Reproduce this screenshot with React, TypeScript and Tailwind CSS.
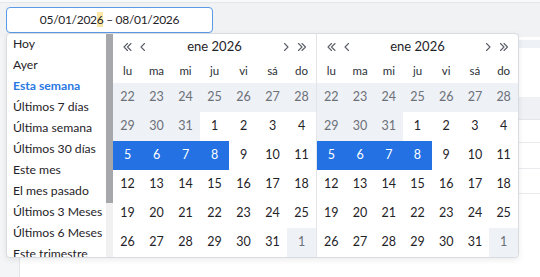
import React from 'react';

const presets = [
  'Hoy',
  'Ayer',
  'Esta semana',
  'Últimos 7 días',
  'Última semana',
  'Últimos 30 días',
  'Este mes',
  'El mes pasado',
  'Últimos 3 Meses',
  'Últimos 6 Meses',
  'Este trimestre',
];

const weekDays = ['lu', 'ma', 'mi', 'ju', 'vi', 'sá', 'do'];

type Day = { n: number; out?: boolean; sel?: boolean };

const weeks: Day[][] = [
  [22, 23, 24, 25, 26, 27, 28].map(n => ({ n, out: true })),
  [
    { n: 29, out: true },
    { n: 30, out: true },
    { n: 31, out: true },
    { n: 1 },
    { n: 2 },
    { n: 3 },
    { n: 4 },
  ],
  [5, 6, 7, 8].map(n => ({ n, sel: true })).concat([9, 10, 11].map(n => ({ n }))),
  [12, 13, 14, 15, 16, 17, 18].map(n => ({ n })),
  [19, 20, 21, 22, 23, 24, 25].map(n => ({ n })),
  [26, 27, 28, 29, 30, 31].map(n => ({ n } as Day)).concat([{ n: 1, out: true }]),
];

function Chevron({ dir, double }: { dir: 'l' | 'r'; double?: boolean }) {
  const one = dir === 'l' ? 'M5.5 1.5 2 5l3.5 3.5' : 'M2.5 1.5 6 5 2.5 8.5';
  const two = dir === 'l' ? 'M9 1.5 5.5 5 9 8.5' : 'M6 1.5 9.5 5 6 8.5';
  return (
    <svg width={double ? 11 : 8} height="10" viewBox={double ? '0 0 11 10' : '0 0 8 10'} fill="none" stroke="#5b6068" strokeWidth="1.1" strokeLinecap="round" strokeLinejoin="round">
      <path d={one} />
      {double && <path d={two} />}
    </svg>
  );
}

function Calendar({ className = '' }: { className?: string }) {
  return (
    <div className={`flex flex-col ${className}`}>
      {/* month header */}
      <div className="h-[25px] flex items-center justify-between px-[9px]">
        <div className="flex items-center gap-[6px]">
          <Chevron dir="l" double />
          <Chevron dir="l" />
        </div>
        <span className="text-[13px] text-[#1f2328]">ene 2026</span>
        <div className="flex items-center gap-[6px]">
          <Chevron dir="r" />
          <Chevron dir="r" double />
        </div>
      </div>
      {/* weekdays */}
      <div className="grid grid-cols-7 h-[24px] items-center">
        {weekDays.map(d => (
          <span key={d} className="text-center text-[11.5px] text-[#2b2f36]">{d}</span>
        ))}
      </div>
      {weeks.map((w, i) => (
        <div key={i} className="grid grid-cols-7 h-[29px]">
          {w.map((d, j) => (
            <div
              key={j}
              className={`flex items-center justify-center text-[12.5px] ${
                d.sel
                  ? 'bg-[#2371e3] text-white'
                  : d.out
                  ? 'bg-[#eef1f5] text-[#6b7079]'
                  : 'text-[#1f2328]'
              }`}
            >
              {d.n}
            </div>
          ))}
        </div>
      ))}
    </div>
  );
}

export default function App() {
  return (
    <div className="relative w-[540px] h-[277px] overflow-hidden bg-white font-['Lato','Liberation_Sans',sans-serif]">
      {/* page top strip */}
      <div className="h-[3px] bg-[#f8f9fa] border-b border-[#e4e6e9]" />

      {/* toolbar band with the range input */}
      <div className="h-[34px] bg-[#f0f2f4] pl-[6px] pt-[4px]">
        <div className="w-[207px] h-[26px] bg-white border border-[#5b9ae6] rounded-[4px] flex items-center justify-center text-[12px] text-[#1f2328] tracking-[-0.3px]">
          <span>
            05/01/202<span className="bg-[#fce7a6]">6</span> – 08/01/2026
          </span>
        </div>
      </div>

      {/* background content under the dropdown */}
      <div className="flex h-[240px]">
        <div className="w-[20px] bg-[#f4f5f7] border-r border-[#e3e5e8]" />
        <div className="flex-1 flex flex-col">
          <div className="h-[3px]" />
          <div className="h-[8px] bg-[#eef2f7]" />
          <div className="h-[49px]" />
          <div className="h-[23px] bg-[#eff1f4] border-b border-[#e3e5e8]" />
          <div className="h-[23px] border-b border-[#e8eaed]" />
          <div className="h-[26px] border-b border-[#e8eaed]" />
          <div className="h-[25px] border-b border-[#e8eaed]" />
        </div>
      </div>

      {/* date range dropdown */}
      <div className="absolute left-[6px] top-[33px] w-[513px] h-[225px] bg-white border border-[#d8dbe0] rounded-[4px] shadow-[0_2px_6px_rgba(0,0,0,0.08)] flex overflow-hidden">
        <div className="w-[99px] flex flex-col">
          {presets.map(p => (
            <div
              key={p}
              className={`h-[21px] shrink-0 flex items-center pl-[6px] text-[12.2px] whitespace-nowrap ${
                p === 'Esta semana' ? 'text-[#2a78e4] font-bold' : 'text-[#1f2328]'
              }`}
            >
              {p}
            </div>
          ))}
        </div>
        <div className="w-[7px] bg-[#f1f1f2] flex flex-col">
          <div className="h-[169px] bg-[#a6a7ab]" />
        </div>
        <Calendar className="w-[203px]" />
        <Calendar className="w-[202px] border-l border-[#e3e5e9]" />
      </div>
    </div>
  );
}
